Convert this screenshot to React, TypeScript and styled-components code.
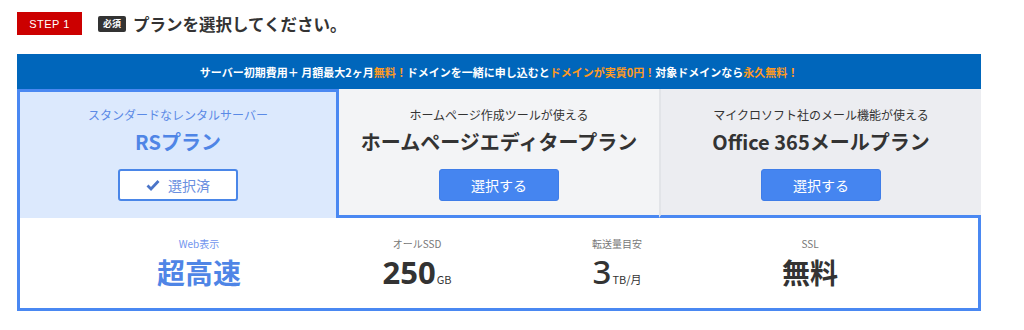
import React from "react";
import styled, { createGlobalStyle } from "styled-components";

const GlobalStyle = createGlobalStyle`
  body {
    margin: 0;
    background: #fff;
    font-family: "Noto Sans CJK JP", "Noto Sans", sans-serif;
    color: #333;
  }
`;

const Page = styled.div`
  width: 964px;
  padding: 12px 0 0 17px;
`;

const StepHeader = styled.div`
  display: flex;
  align-items: center;
  height: 23px;
`;

const StepBadge = styled.div`
  width: 65px;
  height: 23px;
  background: #cc0000;
  color: #fff;
  font-family: "Liberation Sans", "Noto Sans CJK JP", sans-serif;
  font-size: 11px;
  display: flex;
  align-items: center;
  justify-content: center;
  letter-spacing: 0.5px;
`;

const Required = styled.span`
  margin-left: 16px;
  background: #333;
  color: #fff;
  font-size: 9px;
  font-weight: bold;
  border-radius: 2px;
  padding: 1px 5px;
  line-height: 14px;
`;

const StepTitle = styled.h2`
  margin: 0 0 0 7px;
  font-size: 16.5px;
  font-weight: bold;
  color: #333;
`;

const Banner = styled.div`
  margin-top: 19px;
  height: 35px;
  background: #0066bb;
  color: #fff;
  font-size: 11px;
  font-weight: bold;
  display: flex;
  align-items: center;
  justify-content: center;
`;

const Hi = styled.span`
  color: #ff9a1f;
`;

const Tabs = styled.div`
  display: flex;
`;

const Tab = styled.div<{ $selected?: boolean; $bg?: string; $divider?: boolean }>`
  width: ${(p) => (p.$selected ? "322px" : p.$divider ? "322px" : "320px")};
  box-sizing: border-box;
  background: ${(p) => p.$bg};
  border: ${(p) => (p.$selected ? "3px solid #4a88f2" : "none")};
  border-bottom: ${(p) => (p.$selected ? "none" : "3px solid #4a88f2")};
  border-left: ${(p) =>
    p.$selected ? "3px solid #4a88f2" : p.$divider ? "2px solid #e2e4e8" : "none"};
  padding: ${(p) => (p.$selected ? "14px 0 17px" : "17px 0 14px")};
  display: flex;
  flex-direction: column;
  align-items: center;
`;

const TabSub = styled.div<{ $selected?: boolean }>`
  font-size: 12px;
  line-height: 18px;
  color: ${(p) => (p.$selected ? "#5b8ae6" : "#333")};
`;

const TabName = styled.div<{ $selected?: boolean }>`
  margin-top: 4px;
  font-size: 20px;
  line-height: 28px;
  font-weight: bold;
  color: ${(p) => (p.$selected ? "#4f85e6" : "#333")};
`;

const SelectButton = styled.button<{ $done?: boolean }>`
  margin-top: 13px;
  width: 120px;
  height: 32px;
  box-sizing: border-box;
  border-radius: 3px;
  font-family: inherit;
  font-size: 14px;
  display: flex;
  align-items: center;
  justify-content: center;
  gap: 8px;
  background: ${(p) => (p.$done ? "#fff" : "#4585f0")};
  border: ${(p) => (p.$done ? "2px solid #4a86e8" : "1px solid #3f7de8")};
  color: ${(p) => (p.$done ? "#6a8fe0" : "#fff")};
`;

const SpecBox = styled.div`
  border: 3px solid #4a88f2;
  border-top: none;
  background: #fff;
  display: grid;
  grid-template-columns: 218px 218px 182px 204px;
  padding: 18px 0 11px 70px;
`;

const SpecCell = styled.div`
  display: flex;
  flex-direction: column;
  align-items: center;
`;

const SpecLabel = styled.div<{ $accent?: boolean }>`
  font-size: 10px;
  line-height: 16px;
  color: ${(p) => (p.$accent ? "#6f94ee" : "#777")};
`;

const SpecValue = styled.div<{ $accent?: boolean; $light?: boolean }>`
  margin-top: 2px;
  font-size: 28px;
  line-height: 36px;
  font-weight: ${(p) => (p.$light ? 500 : "bold")};
  color: ${(p) => (p.$accent ? "#4f85e6" : "#333")};
  display: flex;
  align-items: baseline;
`;

const Num = styled.span<{ $light?: boolean }>`
  font-family: "Noto Sans", sans-serif;
  font-size: ${(p) => (p.$light ? "33px" : "31px")};
  font-weight: ${(p) => (p.$light ? 500 : "bold")};
`;

const Unit = styled.span`
  font-size: 11px;
  font-weight: normal;
  margin-left: 1px;
`;

const Check = () => (
  <svg width="14" height="12" viewBox="0 0 14 12">
    <path d="M1.5 6.5 L5 10 L12.5 2" fill="none" stroke="#4a74c8" strokeWidth="2.8" />
  </svg>
);

const plans = [
  { sub: "スタンダードなレンタルサーバー", name: "RSプラン", selected: true, divider: false, bg: "#dce9fd" },
  { sub: "ホームページ作成ツールが使える", name: "ホームページエディタープラン", selected: false, divider: false, bg: "#f3f4f6" },
  { sub: "マイクロソフト社のメール機能が使える", name: "Office 365メールプラン", selected: false, divider: true, bg: "#ecedf1" },
];

const App = () => {
  return (
    <>
      <GlobalStyle />
      <Page>
        <StepHeader>
          <StepBadge>STEP 1</StepBadge>
          <Required>必須</Required>
          <StepTitle>プランを選択してください。</StepTitle>
        </StepHeader>
        <Banner>
          サーバー初期費用＋ 月額最大2ヶ月<Hi>無料！</Hi>ドメインを一緒に申し込むと
          <Hi>ドメインが実質0円！</Hi>対象ドメインなら<Hi>永久無料！</Hi>
        </Banner>
        <Tabs>
          {plans.map((p) => (
            <Tab key={p.name} $selected={p.selected} $divider={p.divider} $bg={p.bg}>
              <TabSub $selected={p.selected}>{p.sub}</TabSub>
              <TabName $selected={p.selected}>{p.name}</TabName>
              {p.selected ? (
                <SelectButton $done>
                  <Check />
                  選択済
                </SelectButton>
              ) : (
                <SelectButton>選択する</SelectButton>
              )}
            </Tab>
          ))}
        </Tabs>
        <SpecBox>
          <SpecCell>
            <SpecLabel $accent>Web表示</SpecLabel>
            <SpecValue $accent>超高速</SpecValue>
          </SpecCell>
          <SpecCell>
            <SpecLabel>オールSSD</SpecLabel>
            <SpecValue>
              <Num>250</Num>
              <Unit>GB</Unit>
            </SpecValue>
          </SpecCell>
          <SpecCell>
            <SpecLabel>転送量目安</SpecLabel>
            <SpecValue $light>
              <Num $light>3</Num>
              <Unit>TB/月</Unit>
            </SpecValue>
          </SpecCell>
          <SpecCell>
            <SpecLabel>SSL</SpecLabel>
            <SpecValue>無料</SpecValue>
          </SpecCell>
        </SpecBox>
      </Page>
    </>
  );
};

export default App;
